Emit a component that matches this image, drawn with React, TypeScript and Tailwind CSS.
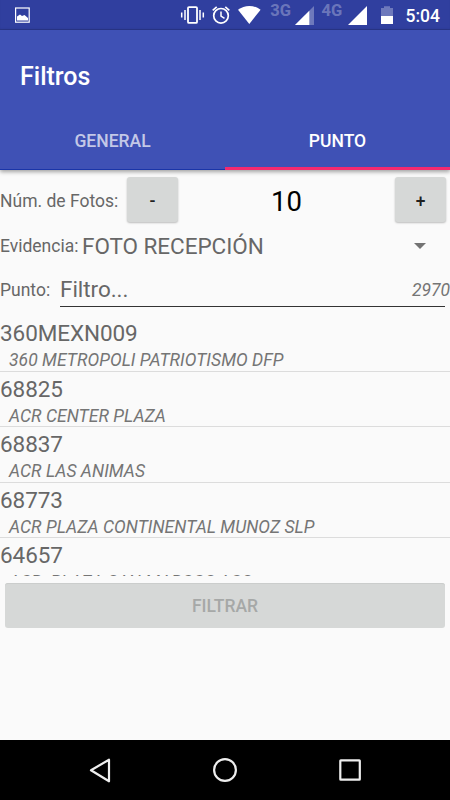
import React from 'react';

interface Point {
  code: string;
  name: string;
}

const points: Point[] = [
  { code: '360MEXN009', name: '360 METROPOLI PATRIOTISMO DFP' },
  { code: '68825', name: 'ACR CENTER PLAZA' },
  { code: '68837', name: 'ACR LAS ANIMAS' },
  { code: '68773', name: 'ACR PLAZA CONTINENTAL MUNOZ SLP' },
  { code: '64657', name: 'ACR  PLAZA SAN MARCOS AGS' },
];

const StatusBar: React.FC = () => (
  <div className="h-[30px] shrink-0 bg-[#303f9f] shadow-[inset_0_-1px_1px_rgba(0,0,0,0.15)]">
    <svg width="450" height="30" viewBox="0 0 450 30" fill="none">
      {/* picture notification */}
      <rect x="15.6" y="8" width="13.6" height="14.2" stroke="#fff" strokeWidth="1.2" />
      <path d="M17 20.5v-4l3-2 2 1.5 2.5-1 3.5 3v2.5z" fill="#fff" />
      {/* vibrate */}
      <rect x="188" y="7.1" width="9" height="15.8" rx="1" stroke="#fff" strokeWidth="1.8" />
      <path d="M185 10v10M181.700 12.500v5M200 10v10M203.300 12.500v5" stroke="#fff" strokeWidth="1.5" />
      {/* alarm */}
      <circle cx="221" cy="15.8" r="7.3" stroke="#fff" strokeWidth="1.7" />
      <path d="M221 11.500v4.700l3.500 2.200" stroke="#fff" strokeWidth="1.5" />
      <path d="M212.700 10.300l4-3.400M229.300 10.300l-4-3.400" stroke="#fff" strokeWidth="1.7" />
      {/* wifi */}
      <path d="M249.300 24L238 9.800c6.500-5.200 16.100-5.200 22.600 0z" fill="#fff" />
      {/* signal */}
      <path d="M314 6v19h-19z" fill="#fff" fillOpacity="0.3" />
      <path d="M309.300 10.700V25H295z" fill="#fff" />
      <path d="M367 6v19h-19z" fill="#fff" />
      {/* battery */}
      <path d="M384 6.300h6v1.700h3v8h-12V8h3z" fill="#fff" fillOpacity="0.3" />
      <path d="M381 16h12v8h-12z" fill="#fff" />
      <text x="270.3" y="16.4" className="font-['Roboto'] text-[16.5px] font-bold" fill="#fff" fillOpacity="0.3">3G</text>
      <text x="321.5" y="16.4" className="font-['Roboto'] text-[16.5px] font-bold" fill="#fff" fillOpacity="0.3">4G</text>
      <text x="405.5" y="22" className="font-['Roboto'] text-[17.5px] font-medium" fill="#fff">5:04</text>
    </svg>
  </div>
);

const StepButton: React.FC<{ label: string }> = ({ label }) => (
  <button className="h-[45px] w-[51px] rounded-[3px] bg-[#d6d8d7] text-[17.5px] leading-6 font-medium text-black/87 shadow-[0_1px_2px_rgba(0,0,0,0.25)]">
    <span className="block pt-0.5">{label}</span>
  </button>
);

const App: React.FC = () => {
  return (
    <div className="flex h-[800px] w-[450px] flex-col overflow-hidden bg-[#fafafa] font-['Roboto',sans-serif] text-[#676767]">
      <StatusBar />

      <header className="z-10 flex h-[140px] shrink-0 flex-col bg-[#3f51b5] text-white shadow-[0_2px_4px_rgba(0,0,0,0.35)]">
        <h1 className="pt-8 pl-5 text-[25px] leading-[30px] font-medium">Filtros</h1>
        <nav className="mt-auto grid h-[60px] grid-cols-2 text-center text-[17.5px] font-medium">
          <div className="border-b border-[#1a35a8] pt-[19px] leading-6 text-white/70">GENERAL</div>
          <div className="border-b-[3px] border-[#f5296f] pt-[19px] leading-6">PUNTO</div>
        </nav>
      </header>

      <main className="flex flex-1 flex-col">
        <div className="flex h-[52px] items-end">
          <label className="w-[127px] pb-[9px] text-[17.5px] leading-6">Núm. de Fotos:</label>
          <StepButton label="-" />
          <span className="flex-1 pb-[2px] text-center text-[27.5px] leading-9 text-black">10</span>
          <StepButton label="+" />
          <span className="w-[4px]" />
        </div>

        <div className="flex h-12 items-center">
          <label className="w-[82px] text-[17.5px] leading-6">Evidencia:</label>
          <span className="flex-1 text-[22.5px] leading-7 tracking-[-0.05px]">FOTO RECEPCIÓN</span>
          <svg className="mr-[24px]" width="12" height="6" viewBox="0 0 12 6">
            <path d="M0 0h12L6 6z" fill="#737373" />
          </svg>
        </div>

        <div className="flex h-[46px]">
          <label className="w-[60px] pt-2 text-[17.5px] leading-6">Punto:</label>
          <div className="mb-[9px] flex-1 border-b border-[#333] pt-[5px] text-[22.5px] leading-7 tracking-[-0.05px]">Filtro...</div>
          <span className="-ml-[33px] w-[38px] pt-2 text-right text-[17.5px] leading-6 whitespace-nowrap text-[#757575] italic">2970</span>
        </div>

        <ul className="h-[260px] overflow-hidden">
          {points.map((point) => (
            <li key={point.code} className="h-[55.5px] border-b-[1.5px] border-[#dcdcdc]">
              <div className="pt-[3px] text-[22.5px] leading-[29px] tracking-[-0.08px]">{point.code}</div>
              <div className="pl-[9px] text-[17.5px] leading-6 tracking-[0.04px] whitespace-pre text-[#757575] italic">{point.name}</div>
            </li>
          ))}
        </ul>

        <button className="mx-[5px] mt-[7px] h-[45px] rounded-[3px] bg-[#d6d8d7] pt-px text-[17.5px] font-medium text-[#a6a8a7] shadow-[inset_0_1px_0_#cbcdcc]">
          FILTRAR
        </button>
      </main>

      <footer className="h-[60px] shrink-0 bg-black">
        <svg width="450" height="60" viewBox="0 0 450 60" fill="none" stroke="#eee" strokeWidth="2.2" strokeLinejoin="round">
          <path d="M109 19.700v21.600L91 30.300z" />
          <circle cx="225" cy="30" r="10.9" />
          <rect x="340.3" y="20.3" width="19.5" height="19.4" rx="0.5" />
        </svg>
      </footer>
    </div>
  );
};

export default App;
